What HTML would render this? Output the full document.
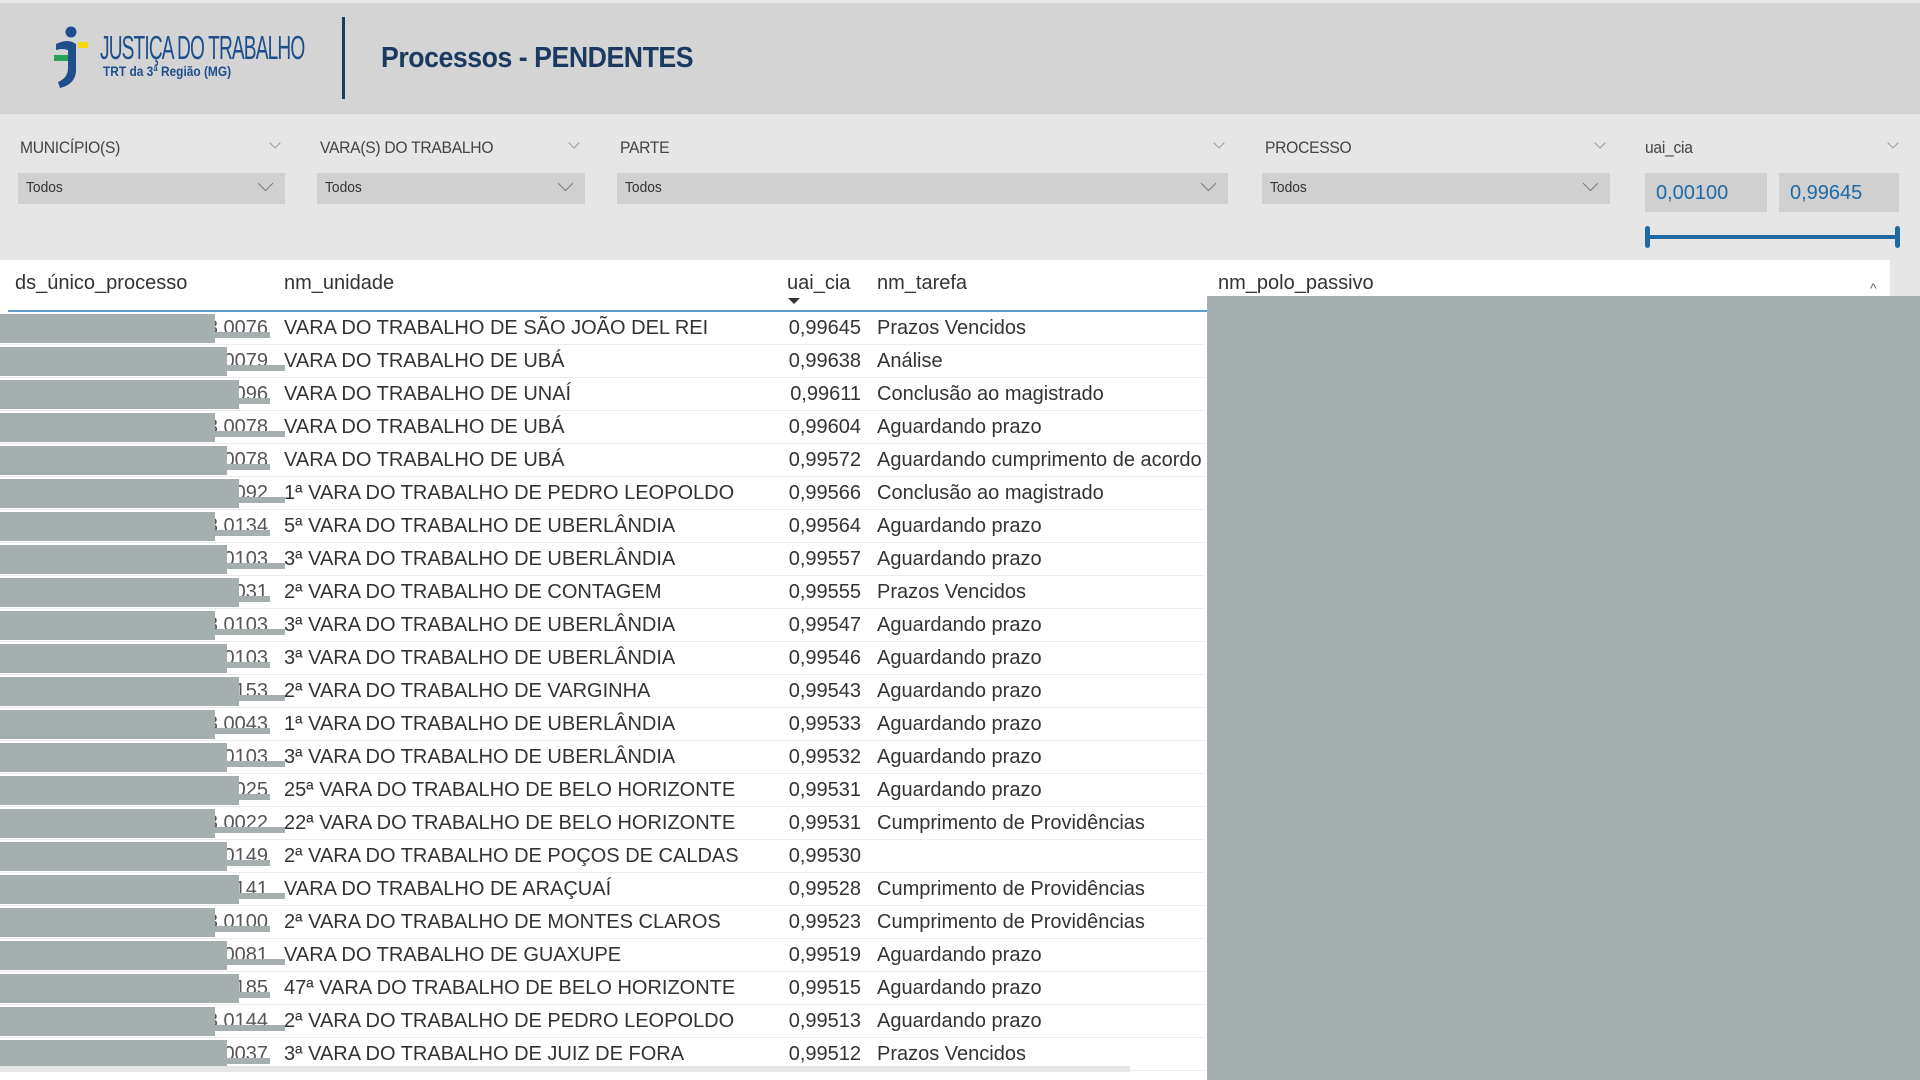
<!DOCTYPE html>
<html><head><meta charset="utf-8"><style>
*{margin:0;padding:0;box-sizing:border-box}
body{width:1920px;height:1080px;overflow:hidden;background:#e6e6e6;font-family:"Liberation Sans",Arial,sans-serif;position:relative}
.abs{position:absolute}
.hdr{left:0;top:0;width:1920px;height:114px;background:#d4d4d4;border-top:3px solid #e9e9e9}
.lbl{font-size:17px;color:#444;top:138px;letter-spacing:-0.3px;transform:scaleX(.92);transform-origin:left}
.dd{top:173px;height:31px;background:#d0d0d0;font-size:15px;color:#333;padding:6px 8px}
.dd span{display:inline-block;transform:scaleX(.92);transform-origin:left}
.chev{position:absolute;width:11px;height:11px;border-right:1.5px solid #777;border-bottom:1.5px solid #777;transform:rotate(45deg)}
.sm{width:8px;height:8px;border-color:#999;border-width:1px}
.inp{top:173px;height:39px;background:#d0d0d0;color:#1f6aa5;font-size:20px;padding:9px 11px}
.tbl{left:0;top:260px;width:1890px;height:820px;background:#fff}
.th{top:272px;font-size:20px;color:#333}
.row{left:0;width:1205px;height:33px;border-bottom:1px solid #ebebeb;font-size:20px;color:#333;line-height:33px}
.row div{position:absolute;top:0;white-space:nowrap}
.blot{background:#a5afb0}
</style></head><body>
<div class="abs hdr"></div>
<svg class="abs" style="left:48px;top:24px" width="50" height="68" viewBox="0 0 50 68">
<circle cx="23" cy="8" r="5.5" fill="#1e4e8c"/>
<path d="M8 20 Q20 14 28 20 L28 46 Q28 60 12 64 L10 58 Q20 54 20 44 L20 26 Q14 24 8 26 Z" fill="#1e4e8c"/>
<rect x="30" y="18" width="10" height="6" fill="#f5d90a"/>
<rect x="6" y="31" width="14" height="6" fill="#2aa35a"/>
</svg>
<div class="abs" style="left:100px;top:29px;font-size:33px;color:#1e4e8c;letter-spacing:-1.5px;transform:scaleX(.58);transform-origin:left;white-space:nowrap">JUSTIÇA DO TRABALHO</div>
<div class="abs" style="left:103px;top:63px;font-size:14px;font-weight:bold;color:#1e4e8c;transform:scaleX(.85);transform-origin:left;white-space:nowrap">TRT da 3ª Região (MG)</div>
<div class="abs" style="left:342px;top:17px;width:3px;height:82px;background:#1c3d63"></div>
<div class="abs" style="left:381px;top:42px;font-size:29px;font-weight:bold;color:#1c3a60;letter-spacing:-0.5px;white-space:nowrap;transform:scaleX(.92);transform-origin:left">Processos - PENDENTES</div>

<div class="abs lbl" style="left:20px">MUNICÍPIO(S)</div>
<div class="abs chev sm" style="left:271px;top:139px"></div>
<div class="abs dd" style="left:18px;width:267px"><span>Todos</span><div class="chev" style="right:14px;top:5px"></div></div>
<div class="abs lbl" style="left:320px">VARA(S) DO TRABALHO</div>
<div class="abs chev sm" style="left:570px;top:139px"></div>
<div class="abs dd" style="left:317px;width:268px"><span>Todos</span><div class="chev" style="right:14px;top:5px"></div></div>
<div class="abs lbl" style="left:620px">PARTE</div>
<div class="abs chev sm" style="left:1215px;top:139px"></div>
<div class="abs dd" style="left:617px;width:611px"><span>Todos</span><div class="chev" style="right:14px;top:5px"></div></div>
<div class="abs lbl" style="left:1265px">PROCESSO</div>
<div class="abs chev sm" style="left:1596px;top:139px"></div>
<div class="abs dd" style="left:1262px;width:348px"><span>Todos</span><div class="chev" style="right:14px;top:5px"></div></div>
<div class="abs lbl" style="left:1645px">uai_cia</div>
<div class="abs chev sm" style="left:1889px;top:139px"></div>
<div class="abs inp" style="left:1645px;width:122px">0,00100</div>
<div class="abs inp" style="left:1779px;width:120px">0,99645</div>
<div class="abs" style="left:1647px;top:235px;width:250px;height:4px;background:#1f6aa5"></div>
<div class="abs" style="left:1645px;top:226px;width:5px;height:22px;border-radius:3px;background:#1f6aa5"></div>
<div class="abs" style="left:1895px;top:226px;width:5px;height:22px;border-radius:3px;background:#1f6aa5"></div>

<div class="abs tbl"></div>
<div class="abs th" style="left:15px">ds_único_processo</div>
<div class="abs th" style="left:284px">nm_unidade</div>
<div class="abs th" style="left:787px">uai_cia</div>
<div class="abs" style="left:788px;top:298px;width:0;height:0;border-left:6px solid transparent;border-right:6px solid transparent;border-top:6px solid #333"></div>
<div class="abs th" style="left:877px">nm_tarefa</div>
<div class="abs th" style="left:1218px">nm_polo_passivo</div>
<div class="abs" style="left:1870px;top:280px;font-size:14px;color:#666">^</div>
<div class="abs" style="left:8px;top:310px;width:1870px;height:2px;background:#5a9ccc"></div>

<div id="rows"></div>
<div class="abs" style="left:1872px;top:300px;width:14px;height:770px;background:#eee"></div>
<div class="abs blot" style="left:1207px;top:296px;width:713px;height:784px"></div>
<div class="abs" style="left:0;top:1066px;width:1130px;height:6px;background:#e6e6e6"></div>
<script>
var d=[["03.0076","VARA DO TRABALHO DE SÃO JOÃO DEL REI","0,99645","Prazos Vencidos"],
["03.0079","VARA DO TRABALHO DE UBÁ","0,99638","Análise"],
["03.0096","VARA DO TRABALHO DE UNAÍ","0,99611","Conclusão ao magistrado"],
["03.0078","VARA DO TRABALHO DE UBÁ","0,99604","Aguardando prazo"],
["03.0078","VARA DO TRABALHO DE UBÁ","0,99572","Aguardando cumprimento de acordo"],
["03.0092","1ª VARA DO TRABALHO DE PEDRO LEOPOLDO","0,99566","Conclusão ao magistrado"],
["03.0134","5ª VARA DO TRABALHO DE UBERLÂNDIA","0,99564","Aguardando prazo"],
["03.0103","3ª VARA DO TRABALHO DE UBERLÂNDIA","0,99557","Aguardando prazo"],
["03.0031","2ª VARA DO TRABALHO DE CONTAGEM","0,99555","Prazos Vencidos"],
["03.0103","3ª VARA DO TRABALHO DE UBERLÂNDIA","0,99547","Aguardando prazo"],
["03.0103","3ª VARA DO TRABALHO DE UBERLÂNDIA","0,99546","Aguardando prazo"],
["03.0153","2ª VARA DO TRABALHO DE VARGINHA","0,99543","Aguardando prazo"],
["03.0043","1ª VARA DO TRABALHO DE UBERLÂNDIA","0,99533","Aguardando prazo"],
["03.0103","3ª VARA DO TRABALHO DE UBERLÂNDIA","0,99532","Aguardando prazo"],
["03.0025","25ª VARA DO TRABALHO DE BELO HORIZONTE","0,99531","Aguardando prazo"],
["03.0022","22ª VARA DO TRABALHO DE BELO HORIZONTE","0,99531","Cumprimento de Providências"],
["03.0149","2ª VARA DO TRABALHO DE POÇOS DE CALDAS","0,99530",""],
["03.0141","VARA DO TRABALHO DE ARAÇUAÍ","0,99528","Cumprimento de Providências"],
["03.0100","2ª VARA DO TRABALHO DE MONTES CLAROS","0,99523","Cumprimento de Providências"],
["03.0081","VARA DO TRABALHO DE GUAXUPE","0,99519","Aguardando prazo"],
["03.0185","47ª VARA DO TRABALHO DE BELO HORIZONTE","0,99515","Aguardando prazo"],
["03.0144","2ª VARA DO TRABALHO DE PEDRO LEOPOLDO","0,99513","Aguardando prazo"],
["03.0037","3ª VARA DO TRABALHO DE JUIZ DE FORA","0,99512","Prazos Vencidos"]];
var h="";
d.forEach(function(r,i){var t=312+i*33;
h+='<div class="abs row" style="top:'+t+'px"><div style="right:937px;color:#555">'+r[0]+'</div><div class="blot" style="left:0;top:2px;width:'+(215+(i%3)*12)+'px;height:29px"></div><div class="blot" style="left:0;top:20px;width:'+(270+(i%2)*15)+'px;height:6px"></div><div style="left:284px">'+r[1]+'</div><div style="left:787px;width:74px;text-align:right">'+r[2]+'</div><div style="left:877px">'+r[3]+'</div></div>';});
document.getElementById("rows").innerHTML=h;
</script>
</body></html>
